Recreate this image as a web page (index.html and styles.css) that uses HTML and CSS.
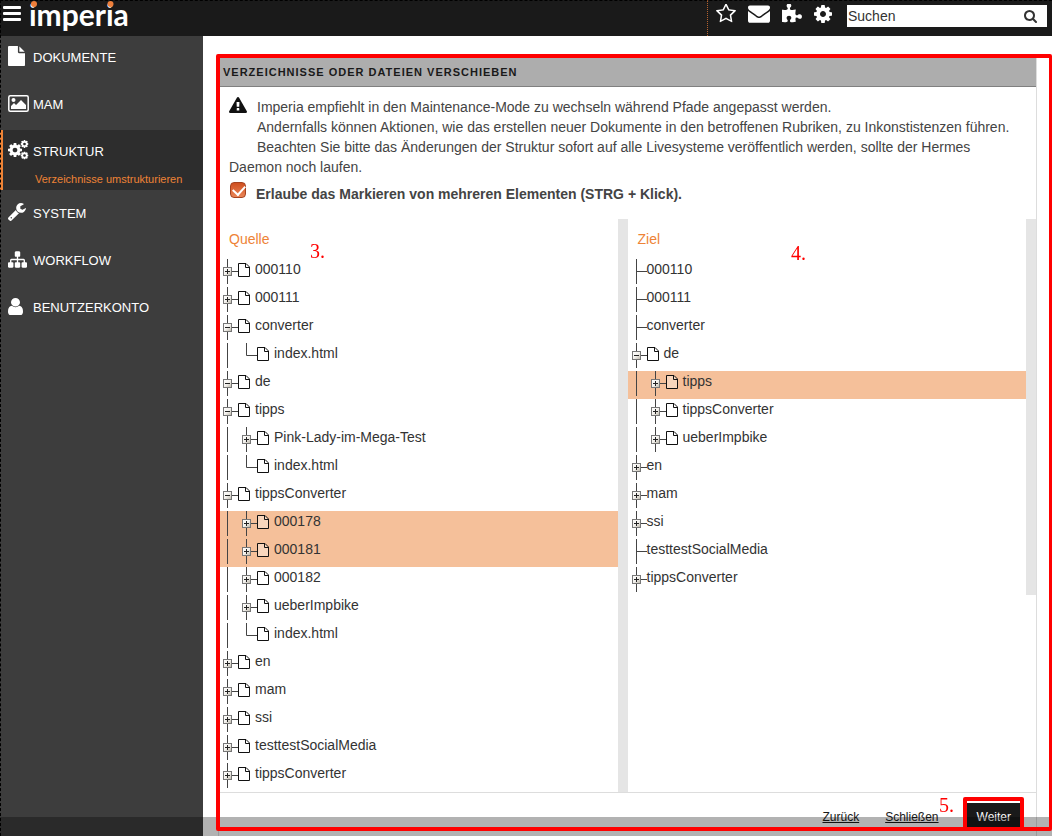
FILE: index.html
```html
<!DOCTYPE html>
<html lang="de">
<head>
<meta charset="utf-8">
<meta name="viewport" content="width=device-width, initial-scale=1">
<title>imperia</title>
<link rel="stylesheet" href="styles.css">
</head>
<body>
<svg class="defs" aria-hidden="true">
  <linearGradient id="knob" x1="0" y1="0" x2="1" y2="1"><stop offset="0" stop-color="#fff"/><stop offset="0.5" stop-color="#f4f2ee"/><stop offset="1" stop-color="#b9b4a6"/></linearGradient>
  <symbol id="line" viewBox="0 0 19 25"><path d="M8.500 0v25" stroke="#444" fill="none"/></symbol>
  <symbol id="tee" viewBox="0 0 19 25"><path d="M8.500 0v25M8.500 12.500H19" stroke="#444" fill="none"/></symbol>
  <symbol id="end" viewBox="0 0 19 25"><path d="M8.500 0v12.500H19" stroke="#444" fill="none"/></symbol>
  <symbol id="minus" viewBox="0 0 19 25"><path d="M8.500 0v25M8.500 12.500H19" stroke="#444" fill="none"/><rect x="4.500" y="8.500" width="8" height="8" fill="url(#knob)" stroke="#777"/><path d="M6 12.500h5" stroke="#222"/></symbol>
  <symbol id="plus" viewBox="0 0 19 25"><path d="M8.500 0v25M8.500 12.500H19" stroke="#444" fill="none"/><rect x="4.500" y="8.500" width="8" height="8" fill="url(#knob)" stroke="#777"/><path d="M6 12.500h5M8.500 10v5" stroke="#222"/></symbol>
  <symbol id="page" viewBox="0 0 12 14"><path d="M.5.5h7.500l3.500 3.500v9.500H.5z" fill="#fff" fill-opacity=".35" stroke="#111"/><path d="M7.500.5v4h4" fill="none" stroke="#111"/></symbol>
  <symbol id="cog" viewBox="128 128 1536 1536"><path d="M1152 896q0-106-75-181t-181-75-181 75-75 181 75 181 181 75 181-75 75-181zm512-109v222q0 12-8 23t-20 13l-185 28q-19 54-39 91 35 50 107 138 10 12 10 25t-9 23q-27 37-99 108t-94 71q-12 0-26-9l-138-108q-44 23-91 38-16 136-29 186-7 28-36 28h-222q-14 0-24.500-8.500t-11.500-21.500l-28-184q-49-16-90-37l-141 107q-10 9-25 9-14 0-25-11-126-114-165-168-7-10-7-23 0-12 8-23 15-21 51-66.500t54-70.500q-27-50-41-99l-183-27q-13-2-21-12.500t-8-23.500v-222q0-12 8-23t19-13l186-28q14-46 39-92-40-57-107-138-10-12-10-24 0-10 9-23 26-36 98.500-107.500t94.500-71.500q13 0 26 10l138 107q44-23 91-38 16-136 29-186 7-28 36-28h222q14 0 24.500 8.500t11.500 21.500l28 184q49 16 90 37l142-107q9-9 24-9 13 0 25 10 129 119 165 170 7 8 7 22 0 12-8 23-15 21-51 66.500t-54 70.500q26 50 41 98l183 28q13 2 21 12.500t8 23.500z"/></symbol>
</svg>

<header class="topbar">
  <button class="burger" type="button" aria-label="Menü"><svg width="18" height="15" viewBox="0 0 18 15"><g fill="#fff"><rect width="18" height="3" rx="1"/><rect y="6" width="18" height="3" rx="1"/><rect y="12" width="18" height="3" rx="1"/></g></svg></button>
  <a class="logo" href="#">imperia<svg class="logo-dots" width="84" height="8" viewBox="0 0 84 8" aria-hidden="true"><g fill="#ee7f3b"><circle cx="3" cy="4" r="3"/><circle cx="79.500" cy="4" r="3"/></g></svg></a>
  <nav class="tools" aria-label="Werkzeuge">
    <a href="#" aria-label="Favoriten"><svg width="20" height="19" viewBox="64 96 1664 1587"><path d="M1201 1004l306-297-422-62-189-382-189 382-422 62 306 297-73 421 378-199 377 199zm527-357q0 22-26 48l-363 354 86 500q1 7 1 20 0 50-41 50-19 0-40-12l-449-236-449 236q-22 12-40 12-21 0-31.500-14.500t-10.500-35.500q0-6 2-20l86-500-364-354q-25-27-25-48 0-37 56-46l502-73 225-455q19-41 49-41t49 41l225 455 502 73q56 9 56 46z"/></svg></a>
    <a href="#" aria-label="Nachrichten"><svg width="22" height="18" viewBox="0 230 1792 1440"><path d="M1792 710v794q0 66-47 113t-113 47h-1472q-66 0-113-47t-47-113v-794q44 49 101 87 362 246 497 345 57 42 92.500 65.500t94.500 48 110 24.500h2q51 0 110-24.500t94.500-48 92.500-65.500q170-123 498-345 57-39 100-87zm0-294q0 79-49 151t-122 123q-376 261-468 325-10 7-42.500 31t-54 38.500-52 32.500-57.500 27-50 9h-2q-23 0-50-9t-57.500-27-52-32.500-54-38.500-42.500-31q-91-64-262-182.500t-205-142.500q-62-42-117-115.500t-55-136.500q0-78 41.500-130t118.500-52h1472q65 0 112.500 47t47.500 113z"/></svg></a>
    <a href="#" aria-label="Module"><svg width="20" height="20" viewBox="90 30 1670 1670"><path d="M1755 1083q0 81-44.500 135t-123.500 54q-41 0-77.500-17.500t-59-38-56.500-38-71-17.500q-110 0-110 124 0 39 16 115t15 115v5q-22 0-33 1-34 3-97.500 11.500t-115.500 13.500-98 5q-61 0-103-26.500t-42-83.500q0-37 17.500-71t38-56.500 38-59 17.500-77.500q0-79-54-123.500t-135-44.500q-84 0-143 45.500t-59 127.500q0 43 15 83t33.500 64.500 33.500 53 15 50.500q0 45-46 89-37 35-117 35-95 0-245-24-9-2-27.500-4t-27.500-4l-13-2q-1 0-3-1-2 0-2-1v-1024q2 1 17.500 3.500t34 5 21.500 3.500q150 24 245 24 80 0 117-35 46-44 46-89 0-22-15-50.500t-33.500-53-33.500-64.500-15-83q0-82 59-127.500t144-45.500q80 0 134 44.500t54 123.500q0 41-17.500 77.500t-38 59-38 56.500-17.500 71q0 57 42 83.500t103 26.500q64 0 180-15t163-17v2q-1 2-3.500 17.500t-5 34-3.500 21.500q-24 150-24 245 0 80 35 117 44 46 89 46 22 0 50.500-15t53-33.500 64.500-33.500 83-15q82 0 127.500 59t45.500 143z"/></svg></a>
    <a href="#" aria-label="Einstellungen"><svg width="18" height="18"><use href="#cog"/></svg></a>
  </nav>
  <form class="search">
    <input type="text" value="Suchen" aria-label="Suchen">
    <button type="button" aria-label="Suche starten"><svg width="13" height="13" viewBox="64 128 1664 1664"><path d="M1216 832q0-185-131.500-316.500t-316.500-131.500-316.500 131.500-131.500 316.500 131.500 316.500 316.500 131.500 316.500-131.500 131.500-316.500zm512 832q0 52-38 90t-90 38q-54 0-90-38l-343-342q-179 124-399 124-143 0-273.500-55.500t-225-150-150-225-55.500-273.500 55.500-273.500 150-225 225-150 273.500-55.500 273.500 55.500 225 150 150 225 55.500 273.500q0 220-124 399l343 343q37 37 37 90z"/></svg></button>
  </form>
</header>

<div class="shell">
  <nav class="sidebar" aria-label="Hauptmenü">
    <ul>
      <li><a href="#"><span class="ico"><svg width="17" height="20" viewBox="128 0 1536 1792" preserveAspectRatio="none"><path d="M1152 512v-472q22 14 36 28l408 408q14 14 28 36h-472zm-128 32q0 40 28 68t68 28h544v1056q0 40-28 68t-68 28h-1344q-40 0-68-28t-28-68v-1600q0-40 28-68t68-28h800v544z"/></svg></span>DOKUMENTE</a></li>
      <li><a href="#"><span class="ico"><svg width="21" height="17" viewBox="0 0 21 17"><rect x=".8" y=".8" width="19.400" height="15.400" rx="1.500" fill="none" stroke="#fff" stroke-width="1.500"/><circle cx="5.500" cy="5" r="2"/><path d="M3 14v-3l3-3 2 2 5-5 5 5v4z"/></svg></span>MAM</a></li>
      <li class="active"><a href="#"><span class="ico"><svg width="21" height="20" viewBox="0 0 21 20"><use href="#cog" x="0" y="3" width="14" height="14"/><use href="#cog" x="12.500" y="0" width="8" height="8"/><use href="#cog" x="12.500" y="11.500" width="8" height="8"/></svg></span>STRUKTUR</a>
        <a class="sub" href="#">Verzeichnisse umstrukturieren</a></li>
      <li><a href="#"><span class="ico"><svg width="18" height="18" viewBox="85 120 1650 1650"><path d="M448 1472q0-26-19-45t-45-19-45 19-19 45 19 45 45 19 45-19 19-45zm644-420l-682 682q-37 37-90 37-52 0-91-37l-106-108q-38-36-38-90 0-53 38-91l681-681q39 98 114.500 173.500t173.500 114.500zm634-435q0 39-23 106-47 134-164.500 217.500t-258.500 83.500q-185 0-316.500-131.500t-131.500-316.500 131.500-316.500 316.500-131.500q58 0 121.500 16.500t107.500 46.500q16 11 16 28t-16 28l-293 169v224l193 107q5-3 79-48.500t135.500-81 70.500-35.500q15 0 23.500 10t8.500 25z"/></svg></span>SYSTEM</a></li>
      <li><a href="#"><span class="ico"><svg width="19" height="17" viewBox="0 128 1792 1536"><path d="M1792 1248v320q0 40-28 68t-68 28h-320q-40 0-68-28t-28-68v-320q0-40 28-68t68-28h96v-192h-512v192h96q40 0 68 28t28 68v320q0 40-28 68t-68 28h-320q-40 0-68-28t-28-68v-320q0-40 28-68t68-28h96v-192h-512v192h96q40 0 68 28t28 68v320q0 40-28 68t-68 28h-320q-40 0-68-28t-28-68v-320q0-40 28-68t68-28h96v-192q0-52 38-90t90-38h512v-192h-96q-40 0-68-28t-28-68v-320q0-40 28-68t68-28h320q40 0 68 28t28 68v320q0 40-28 68t-68 28h-96v192h512q52 0 90 38t38 90v192h96q40 0 68 28t28 68z"/></svg></span>WORKFLOW</a></li>
      <li><a href="#"><span class="ico"><svg width="15" height="17" viewBox="256 128 1280 1536" preserveAspectRatio="none"><path d="M1536 1399q0 109-62.500 187t-150.500 78h-854q-88 0-150.500-78t-62.500-187q0-85 8.500-160.500t31.500-152 58.500-131 94-89 134.500-34.500q131 128 313 128t313-128q76 0 134.500 34.500t94 89 58.500 131 31.500 152 8.500 160.500zm-256-887q0 159-112.500 271.500t-271.500 112.500-271.500-112.500-112.500-271.500 112.500-271.500 271.500-112.500 271.500 112.500 112.500 271.500z"/></svg></span>BENUTZERKONTO</a></li>
    </ul>
  </nav>

  <main class="main">
    <section class="panel">
      <h1>VERZEICHNISSE ODER DATEIEN VERSCHIEBEN</h1>
      <div class="notice">
        <p class="lead"><svg width="18" height="16" viewBox="0 0 1792 1664" preserveAspectRatio="none" aria-hidden="true"><path d="M1024 1375v-190q0-14-9.500-23.500t-22.500-9.500h-192q-13 0-22.500 9.500t-9.500 23.500v190q0 14 9.500 23.500t22.500 9.500h192q13 0 22.500-9.500t9.500-23.500zm-2-374l18-459q0-12-10-19-13-11-24-11h-220q-11 0-24 11-10 7-10 21l17 457q0 10 10 16.500t24 6.500h185q14 0 23.500-6.500t10.500-16.500zm-14-934l768 1408q35 63-2 126-17 29-46.500 46t-63.500 17h-1536q-34 0-63.500-17t-46.500-46q-37-63-2-126l768-1408q17-31 47-49t65-18 65 18 47 49z"/></svg>Imperia empfiehlt in den Maintenance-Mode zu wechseln während Pfade angepasst werden.</p>
        <p>Andernfalls können Aktionen, wie das erstellen neuer Dokumente in den betroffenen Rubriken, zu Inkonstistenzen führen.</p>
        <p>Beachten Sie bitte das Änderungen der Struktur sofort auf alle Livesysteme veröffentlich werden, sollte der Hermes Daemon noch laufen.</p>
        <label class="multi"><input type="checkbox" checked>Erlaube das Markieren von mehreren Elementen (STRG + Klick).</label>
      </div>
      <div class="trees">
        <section class="tree">
          <h2>Quelle</h2>
          <ul>
            <li><button type="button" aria-label="Öffnen"><svg><use href="#plus"/></svg></button><svg class="page"><use href="#page"/></svg>000110</li>
            <li><button type="button" aria-label="Öffnen"><svg><use href="#plus"/></svg></button><svg class="page"><use href="#page"/></svg>000111</li>
            <li><button type="button" aria-label="Schließen"><svg><use href="#minus"/></svg></button><svg class="page"><use href="#page"/></svg>converter</li>
            <li><svg><use href="#line"/></svg><svg><use href="#end"/></svg><svg class="page"><use href="#page"/></svg>index.html</li>
            <li><button type="button" aria-label="Schließen"><svg><use href="#minus"/></svg></button><svg class="page"><use href="#page"/></svg>de</li>
            <li><button type="button" aria-label="Schließen"><svg><use href="#minus"/></svg></button><svg class="page"><use href="#page"/></svg>tipps</li>
            <li><svg><use href="#line"/></svg><button type="button" aria-label="Öffnen"><svg><use href="#plus"/></svg></button><svg class="page"><use href="#page"/></svg>Pink-Lady-im-Mega-Test</li>
            <li><svg><use href="#line"/></svg><svg><use href="#end"/></svg><svg class="page"><use href="#page"/></svg>index.html</li>
            <li><button type="button" aria-label="Schließen"><svg><use href="#minus"/></svg></button><svg class="page"><use href="#page"/></svg>tippsConverter</li>
            <li class="sel"><svg><use href="#line"/></svg><button type="button" aria-label="Öffnen"><svg><use href="#plus"/></svg></button><svg class="page"><use href="#page"/></svg>000178</li>
            <li class="sel"><svg><use href="#line"/></svg><button type="button" aria-label="Öffnen"><svg><use href="#plus"/></svg></button><svg class="page"><use href="#page"/></svg>000181</li>
            <li><svg><use href="#line"/></svg><button type="button" aria-label="Öffnen"><svg><use href="#plus"/></svg></button><svg class="page"><use href="#page"/></svg>000182</li>
            <li><svg><use href="#line"/></svg><button type="button" aria-label="Öffnen"><svg><use href="#plus"/></svg></button><svg class="page"><use href="#page"/></svg>ueberImpbike</li>
            <li><svg><use href="#line"/></svg><svg><use href="#end"/></svg><svg class="page"><use href="#page"/></svg>index.html</li>
            <li><button type="button" aria-label="Öffnen"><svg><use href="#plus"/></svg></button><svg class="page"><use href="#page"/></svg>en</li>
            <li><button type="button" aria-label="Öffnen"><svg><use href="#plus"/></svg></button><svg class="page"><use href="#page"/></svg>mam</li>
            <li><button type="button" aria-label="Öffnen"><svg><use href="#plus"/></svg></button><svg class="page"><use href="#page"/></svg>ssi</li>
            <li><button type="button" aria-label="Öffnen"><svg><use href="#plus"/></svg></button><svg class="page"><use href="#page"/></svg>testtestSocialMedia</li>
            <li><button type="button" aria-label="Öffnen"><svg><use href="#plus"/></svg></button><svg class="page"><use href="#page"/></svg>tippsConverter</li>
          </ul>
        </section>
        <section class="tree">
          <h2>Ziel</h2>
          <ul>
            <li><svg><use href="#tee"/></svg>000110</li>
            <li><svg><use href="#tee"/></svg>000111</li>
            <li><svg><use href="#tee"/></svg>converter</li>
            <li><button type="button" aria-label="Schließen"><svg><use href="#minus"/></svg></button><svg class="page"><use href="#page"/></svg>de</li>
            <li class="sel"><svg><use href="#line"/></svg><button type="button" aria-label="Öffnen"><svg><use href="#plus"/></svg></button><svg class="page"><use href="#page"/></svg>tipps</li>
            <li><svg><use href="#line"/></svg><button type="button" aria-label="Öffnen"><svg><use href="#plus"/></svg></button><svg class="page"><use href="#page"/></svg>tippsConverter</li>
            <li><svg><use href="#line"/></svg><button type="button" aria-label="Öffnen"><svg><use href="#plus"/></svg></button><svg class="page"><use href="#page"/></svg>ueberImpbike</li>
            <li><button type="button" aria-label="Öffnen"><svg><use href="#plus"/></svg></button>en</li>
            <li><button type="button" aria-label="Öffnen"><svg><use href="#plus"/></svg></button>mam</li>
            <li><button type="button" aria-label="Öffnen"><svg><use href="#plus"/></svg></button>ssi</li>
            <li><svg><use href="#tee"/></svg>testtestSocialMedia</li>
            <li><button type="button" aria-label="Öffnen"><svg><use href="#plus"/></svg></button>tippsConverter</li>
          </ul>
        </section>
      </div>
      <footer class="actions">
        <a href="#">Zurück</a>
        <a href="#">Schließen</a>
        <button type="button">Weiter</button>
      </footer>
    </section>
    <div class="shade"></div>
    <div class="frame frame-panel"></div>
    <div class="frame frame-next"></div>
    <span class="mark mark-source">3.</span>
    <span class="mark mark-target">4.</span>
    <span class="mark mark-next">5.</span>
  </main>
</div>
</body>
</html>
```
FILE: styles.css
```css
* { box-sizing: border-box; }

body {
  margin: 0;
  min-height: 100vh;
  display: flex;
  flex-direction: column;
  background: #fff;
  color: #444;
  font: 14px/20px "Liberation Sans", Arial, sans-serif;
}

body::before,
body::after {
  content: "";
  position: absolute;
  top: 0;
  left: 0;
  z-index: 2;
}
body::before { right: 0; border-top: 1px dashed #000; }
body::after { bottom: 0; border-left: 1px dashed #000; }

ul, h1, h2, p { margin: 0; padding: 0; }
ul { list-style: none; }
button { padding: 0; border: 0; background: none; font: inherit; cursor: pointer; }
svg { display: block; flex: none; }
.defs { position: absolute; width: 0; height: 0; }

/* Top bar */
.topbar {
  display: flex;
  align-items: flex-start;
  height: 36px;
  padding-right: 5px;
  background: #1a1a1a;
  fill: #fff;
}
.burger { margin: 6px 0 0 3px; }
.logo {
  position: relative;
  margin-left: 8px;
  color: #fff;
  font: bold 30px/28px Lato, sans-serif;
  text-decoration: none;
}
.logo-dots { position: absolute; top: 0; left: 2px; }
.tools {
  display: flex;
  align-items: center;
  gap: 12px;
  height: 36px;
  margin-left: auto;
  padding: 0 15px 9px 8px;
  border-left: 1px dotted #b5622f;
}
.search {
  display: flex;
  align-items: center;
  width: 200px;
  height: 22px;
  margin-top: 5px;
  padding-right: 10px;
  background: #fff;
  fill: #333;
}
.search input {
  flex: 1;
  min-width: 0;
  padding: 0 1px;
  border: 0;
  background: none;
  color: #333;
  font: inherit;
}

/* Sidebar */
.shell { flex: 1; display: flex; }
.sidebar { width: 203px; background: #3d3d3d; fill: #fff; }
.sidebar li { height: 47px; padding: 10px 0 0 8px; }
.sidebar a {
  display: flex;
  align-items: flex-start;
  color: #fff;
  font-size: 13px;
  line-height: 24px;
  text-decoration: none;
}
.ico { width: 25px; height: 20px; display: flex; align-items: center; }
.sidebar .active {
  height: 60px;
  margin-bottom: 2px;
  padding-left: 5px;
  border-left: 3px solid #ee8336;
  background: #2d2d2d;
}
.sidebar .sub {
  padding: 5px 0 0 27px;
  color: #ee8336;
  font-size: 11px;
  line-height: 20px;
}

/* Panel */
.main { position: relative; flex: 1; display: flex; flex-direction: column; min-width: 0; }
.panel {
  flex: 1;
  margin: 21px 15px 0;
  border: solid #ddd;
  border-width: 0 1px;
}
.panel h1 {
  padding: 6px 4px 4px;
  border-bottom: 1px solid #808080;
  background: #adadad;
  color: #1a1a1a;
  font-size: 11px;
  line-height: 19px;
  letter-spacing: 1px;
}
.notice { padding: 10px 9px 15px 10px; }
.notice p { text-indent: 28px; }
.notice .lead { display: flex; text-indent: 0; fill: #111; }
.lead svg { margin-right: 10px; }
.multi {
  display: flex;
  gap: 9px;
  padding-top: 7px;
  font-weight: bold;
}
.multi input {
  position: relative;
  appearance: none;
  width: 16px;
  height: 16px;
  margin: -2px 1px 0;
  border: 1px solid #a5421f;
  border-radius: 4px;
  background: linear-gradient(#cf4f1f, #ea8557);
}
.multi input:checked::after {
  content: "";
  position: absolute;
  top: 0;
  left: 4px;
  width: 6px;
  height: 10px;
  border: solid #fff;
  border-width: 0 2px 2px 0;
  transform: rotate(42deg);
}

/* Directory trees */
.trees { display: flex; align-items: flex-start; border-bottom: 1px solid #ddd; }
.tree { flex: 1; min-width: 0; border-right: 10px solid #e5e5e5; }
.tree:first-child { padding-bottom: 1px; }
.tree h2 {
  padding: 10px;
  color: #ee8336;
  font-size: 14px;
  font-weight: normal;
}
.tree li { display: flex; height: 28px; color: #333; }
.tree li svg { width: 19px; height: 25px; }
.tree li .page { width: 12px; height: 14px; margin: 4px 5px 0 0; }
.tree button { height: 25px; }
.tree .sel { background: #f5c09a; }

/* Actions */
.actions {
  display: flex;
  justify-content: flex-end;
  align-items: center;
  gap: 26px;
  padding: 10px 15px 5px;
  font-size: 12px;
}
.actions a { color: #1a1a1a; }
.actions button {
  height: 28px;
  margin-left: 2px;
  padding: 0 10px;
  background: #1a1a1a;
  color: #fff;
}

/* Overlays */
.shade {
  position: fixed;
  right: 0;
  bottom: 0;
  left: 0;
  height: 19px;
  background: rgba(0, 0, 0, .3);
}
.frame { position: absolute; border: 4px solid #f00; border-radius: 2px; pointer-events: none; }
.frame-panel { top: 18px; right: 0; bottom: 5px; left: 13px; border-right-width: 3px; }
.frame-next { right: 28px; bottom: 5px; width: 61px; height: 34px; }
.mark {
  position: absolute;
  color: #f00;
  font: 20px/24px "Liberation Serif", serif;
}
.mark-source { top: 203px; left: 107px; }
.mark-target { top: 205px; left: 588px; }
.mark-next { right: 98px; bottom: 19px; }
```
